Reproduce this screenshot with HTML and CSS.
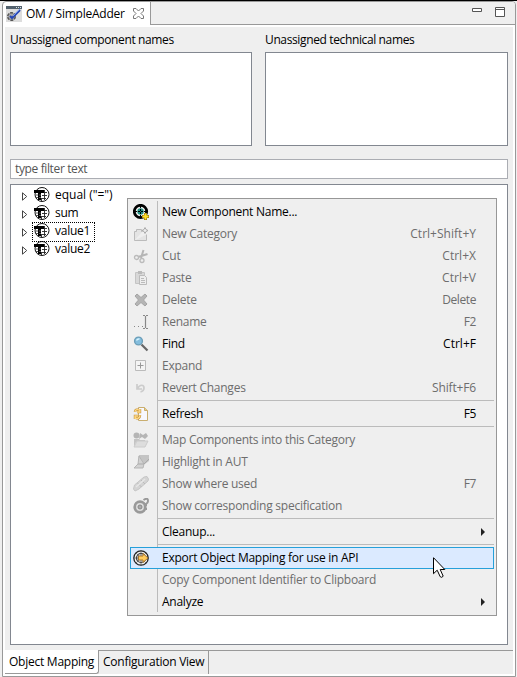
FILE: index.html
```html
<!DOCTYPE html>
<html lang="en">
<head>
<meta charset="utf-8">
<title>OM / SimpleAdder</title>
<link rel="stylesheet" href="styles.css">
</head>
<body>
<svg class="defs" width="0" height="0">
  <defs>
    <symbol id="component" viewBox="0 0 16 16">
      <circle cx="8" cy="7.500" r="7" fill="#fff" stroke="#111" stroke-width="1"/>
      <path d="M8 5.500h5M8 8.500h5M4 11.500h8M10.500 3v10M7.500 12v2" stroke="#222" stroke-width=".9" fill="none"/>
      <path d="M0 3h10v3H7v7H4V6H0z" fill="#000"/>
      <path d="M1 8h3M1 10.500h3M5 8h2M5 10.500h2" stroke="#555"/>
    </symbol>
  </defs>
</svg>
<main class="window">
  <header class="titlebar">
    <div class="view-tab">
      <svg class="tab-icon" width="16" height="16" viewBox="0 0 16 16">
        <path fill="#ddd" d="M0 0h16v16H0z"/><path fill="#53616d" d="M0 0h16v3H0z"/><path fill="#d9e4ea" d="M10 1h1v1h-1zM12 1h1v1h-1zM14 1h1v1h-1z"/>
        <circle cx="5.500" cy="10.500" r="3.800" fill="#aaa" stroke="#555" stroke-width="1.500" stroke-dasharray="3 1"/>
        <path d="M4 10l2 2 8-8" fill="none" stroke="#2847b5" stroke-width="2.200"/><path d="M7 10l7-7" stroke="#7797ef"/>
      </svg>
      <span class="t tab-title">OM / SimpleAdder</span>
      <svg class="close" width="11" height="11" viewBox="0 0 11 11"><path d="M.5.5h2.500l2.500 2.500L8 .5h2.500V3L8 5.500 10.500 8v2.500H8L5.500 8 3 10.500H.5V8L3 5.500.5 3z" fill="#fff" stroke="#777"/></svg>
    </div>
    <div class="title-fill">
      <svg width="34" height="11" viewBox="0 0 34 11"><path d="M.5 1.500h9v3h-9zM23.500.5h9v9h-9zM23.500 2.500h9" fill="#fff" stroke="#555"/></svg>
    </div>
  </header>
  <section class="content">
    <div class="names">
      <div class="name-col"><span class="t l1">Unassigned component names</span><div class="list"></div></div>
      <div class="name-col"><span class="t l2">Unassigned technical names</span><div class="list"></div></div>
    </div>
    <div class="filter"><span class="t">type filter text</span></div>
    <div class="tree">
      <div class="node"><svg class="arrow" width="6" height="9" viewBox="0 0 6 9"><path d="M.5.8v7.400L4.700 4.500z"/></svg><svg class="ni" width="16" height="16"><use href="#component"/></svg><span class="t n1">equal ("=")</span></div>
      <div class="node"><svg class="arrow" width="6" height="9" viewBox="0 0 6 9"><path d="M.5.8v7.400L4.700 4.500z"/></svg><svg class="ni" width="16" height="16"><use href="#component"/></svg><span class="t">sum</span></div>
      <div class="node focused"><svg class="arrow" width="6" height="9" viewBox="0 0 6 9"><path d="M.5.8v7.400L4.700 4.500z"/></svg><svg class="ni" width="16" height="16"><use href="#component"/></svg><span class="t">value1</span></div>
      <div class="node"><svg class="arrow" width="6" height="9" viewBox="0 0 6 9"><path d="M.5.8v7.400L4.700 4.500z"/></svg><svg class="ni" width="16" height="16"><use href="#component"/></svg><span class="t">value2</span></div>
    </div>
    <nav class="bottom-tabs"><div class="btab active"><span class="t">Object Mapping</span></div><div class="btab"><span class="t">Configuration View</span></div></nav>
  </section>
</main>

<div class="menu">
  <div class="item"><svg class="icon" viewBox="0 0 16 16"><circle cx="7.500" cy="7.500" r="6.200" fill="#eee" stroke="#000" stroke-width="2.800"/><circle cx="7.500" cy="7.500" r="3.200" fill="#249184"/><path d="M7.500 2v11M2 7.500h11" stroke="#000" stroke-dasharray="2 1"/><path d="M12.500 9v7M9 12.500h7" stroke="#8b6900" stroke-width="3"/><path d="M12.500 9.500v6M9.500 12.500h6" stroke="#ffe12d" stroke-width="2"/></svg><span class="t">New Component Name...</span></div>
  <div class="item off"><svg class="icon" viewBox="0 0 16 16"><path d="M1.500 14.500v-9h2v-2h5v2h1M1.500 14.500h12v-6" fill="#e4e4e4" stroke="#bbb"/><path d="M12 1.500l1 2 2 1-2 1-1 2-1-2-2-1 2-1z" fill="#eee" stroke="#aaa"/></svg><span class="t">New Category</span><span class="t key">Ctrl+Shift+Y</span></div>
  <div class="item off"><svg class="icon" viewBox="0 0 16 16"><path d="M10.500 2L8 10M14.500 6L5 9" stroke="#b5b5b5" stroke-width="2"/><circle cx="3.500" cy="9.500" r="2" fill="none" stroke="#bbb" stroke-width="1.300"/><circle cx="9" cy="12.500" r="2" fill="none" stroke="#bbb" stroke-width="1.300"/></svg><span class="t">Cut</span><span class="t key">Ctrl+X</span></div>
  <div class="item off"><svg class="icon" viewBox="0 0 16 16"><path d="M2.500 2.500h9v11h-9z" fill="#d8d8d8" stroke="#c4c4c4"/><path d="M5 1h4v3H5z" fill="#bbb"/><path d="M6.500 5.500h5l2 2v7h-7z" fill="#eee" stroke="#bbb"/><path d="M8 8.500h3M8 10.500h4M8 12.500h4" stroke="#bbb"/></svg><span class="t">Paste</span><span class="t key">Ctrl+V</span></div>
  <div class="item off"><svg class="icon" viewBox="0 0 16 16"><path d="M2 4l2-2 4 3.500L12 2l2 2-3.500 4L14 12l-2 2-4-3.500L4 14l-2-2 3.500-4z" fill="#b5b5b5" stroke="#a5a5a5"/></svg><span class="t">Delete</span><span class="t key k0">Delete</span></div>
  <div class="item off"><svg class="icon" viewBox="0 0 16 16"><path d="M1 12.500h1M5 12.500h1M9 12.500h1M10 1.500h2M13 1.500h2M12.500 2v12M10 14.500h2M13 14.500h2" stroke="#888" stroke-width="1.200"/></svg><span class="t">Rename</span><span class="t key k0">F2</span></div>
  <div class="item"><svg class="icon" viewBox="0 0 16 16"><path d="M8.500 8.500l6 6" stroke="#666" stroke-width="2.200"/><circle cx="5.500" cy="5" r="3.900" fill="#83bddd" stroke="#6c9eb8" stroke-width="1.400"/><path d="M3.500 4.500q1-2 3-1.500" fill="none" stroke="#d8f4ff" stroke-width="1.500"/></svg><span class="t">Find</span><span class="t key">Ctrl+F</span></div>
  <div class="item off"><svg class="icon" viewBox="0 0 16 16"><path d="M2.500 2.500h10v10h-10z" fill="#f4f4f4" stroke="#bbb"/><path d="M7.500 4.500v6M4.500 7.500h6" stroke="#999"/></svg><span class="t">Expand</span></div>
  <div class="item off"><svg class="icon" viewBox="0 0 16 16"><path d="M4 4v5h5M4.500 8.500C7 4 11 4.500 11 8q0 3-3.500 4" fill="none" stroke="#ccc" stroke-width="1.700"/></svg><span class="t">Revert Changes</span><span class="t key k1">Shift+F6</span></div>
  <div class="sep"></div>
  <div class="item"><svg class="icon" viewBox="0 0 16 16"><path d="M5.500 1.500h6l3 3v10h-9z" fill="#f7f8ff" stroke="#c9ae70"/><path d="M11.500 1.500v3h3" fill="#e9cf8c" stroke="#c9ae70"/><path d="M2 6c0-3 4-3 5-1M7 3v3H4M7 9c0 4-4 4-5 2M2 13v-3h3" fill="none" stroke="#c08f3c" stroke-width="2.400"/><path d="M2 6c0-3 4-3 5-1M7 3v3H4M7 9c0 4-4 4-5 2M2 13v-3h3" fill="none" stroke="#ffd983" stroke-width="1.300"/></svg><span class="t">Refresh</span><span class="t key k0">F5</span></div>
  <div class="sep"></div>
  <div class="item off"><svg class="icon" viewBox="0 0 16 16"><circle cx="3.500" cy="3.500" r="3" fill="#b5b5b5"/><path d="M7 1l3 2 3-2 2 3-3 3-3-2-3 2" fill="#b5b5b5"/><path d="M1 7h5l1 1h5v2H3l-2 5z" fill="#c4c4c4"/><path d="M4 9h11l-3 6H1z" fill="#ddd" stroke="#ccc"/></svg><span class="t">Map Components into this Category</span></div>
  <div class="item off"><svg class="icon" viewBox="0 0 16 16"><path d="M6 1h10v6l-4 3-7-3z" fill="#c4c4c4"/><path d="M6 2l5 8-1 4H1l4-4z" fill="#d2d2d2" stroke="#b5b5b5"/><path d="M5 10h6l5-5" fill="none" stroke="#aaa"/></svg><span class="t">Highlight in AUT</span></div>
  <div class="item off"><svg class="icon" viewBox="0 0 16 16"><path d="M11 1l3-.5 1.500 2.500-.5 2-9 8-4 2-1.500-2 1-4z" fill="#d4d4d4" stroke="#c6c6c6"/><path d="M8 4l4 4M4.500 7l4 4" stroke="#bbb"/><path d="M3 11l9-8" stroke="#e6e6e6" stroke-width="1.500"/></svg><span class="t">Show where used</span><span class="t key k0">F7</span></div>
  <div class="item off"><svg class="icon" viewBox="0 0 16 16"><circle cx="7" cy="9" r="5.300" fill="#ddd" stroke="#999" stroke-width="2.700"/><circle cx="7" cy="9" r="2" fill="#aaa" stroke="#888"/><path d="M10.500 2Q15-1 15 3q0 2-2 3v2M13 10v2" fill="none" stroke="#999" stroke-width="2"/></svg><span class="t">Show corresponding specification</span></div>
  <div class="sep"></div>
  <div class="item"><svg class="icon"></svg><span class="t">Cleanup...</span><i class="sub"></i></div>
  <div class="sep"></div>
  <div class="item selected"><svg class="icon" viewBox="0 0 16 16"><circle cx="8" cy="8" r="7.200" fill="#eee" stroke="#222" stroke-width="1.300"/><circle cx="8" cy="8" r="4.500" fill="#ddd" stroke="#333" stroke-width="1.200"/><path d="M8 0v16M0 8h16M3 3l10 10M13 3L3 13" stroke="#555" stroke-width=".7"/><path d="M5.500 6H10V3.500L15 8l-5 4.500V10H5.500z" fill="#ffcc60" stroke="#a06d24" stroke-width=".9"/></svg><span class="t">Export Object Mapping for use in API</span></div>
  <div class="item off"><svg class="icon"></svg><span class="t">Copy Component Identifier to Clipboard</span></div>
  <div class="item"><svg class="icon"></svg><span class="t">Analyze</span><i class="sub"></i></div>
</div>
<svg class="cursor" width="13" height="22" viewBox="0 0 13 22"><path d="M.5.7v16l3.700-3.500 3 6.500q1.500 1.500 3-.5l-3-6.700h4.600z" fill="#fff" stroke="#000"/></svg>
</body>
</html>
```
FILE: styles.css
```css
* { box-sizing: border-box; }
body {
  margin: 0; width: 517px; height: 677px; overflow: hidden;
  background: #efefef; border-top: 1px solid #000;
  font: 12px/18px "Open Sans", "Noto Sans", sans-serif; color: #000;
}
.defs { display: block; height: 0; }
svg { flex: none; }
.t { white-space: nowrap; letter-spacing: -0.25px; }
.window {
  margin-left: 2px; width: 514px; height: 676px; background: #fff;
  border: 1px solid #999; border-radius: 4px 4px 0 0;
  display: flex; flex-direction: column;
}
.titlebar { display: flex; height: 23px; flex: none; }
.view-tab { width: 147px; display: flex; align-items: center; padding-left: 3px; }
.tab-title { margin-left: 4px; width: 107px; letter-spacing: -0.24px; }
.title-fill {
  flex: 1; background: #efefef; border: solid #999; border-width: 0 0 1px 1px;
  border-radius: 0 3px 0 0; display: flex; justify-content: flex-end; padding: 5px 9px 0 0;
}
.content { margin: 2px 2px 2px; flex: 1; background: #efefef; display: flex; flex-direction: column; min-height: 0; }
.names { display: flex; gap: 13px; padding: 4px 5px 0; height: 119px; flex: none; }
.name-col { display: flex; flex-direction: column; flex: 0 0 242px; }
.name-col + .name-col { flex-basis: 243px; }
.l1, .l2 { letter-spacing: -0.37px; }
.list { margin-top: 3px; height: 94px; background: #fff; border: 1px solid #828790; }
.filter { margin: 13px 5px 0; height: 20px; flex: none; background: #fff; border: 1px solid #abadb3; padding-left: 4px; color: #555; }
.filter .t { letter-spacing: -0.37px; }
.tree { margin: 5px 5px 0; height: 461px; flex: none; background: #fff; border: 1px solid #828790; padding: 1px 0 0 11px; }
.node { display: flex; align-items: center; height: 18px; }
.arrow { margin-top: 2px; fill: #fff; stroke: #444; }
.ni { margin: 0 5px 0 6px; }
.n1 { letter-spacing: -0.02px; }
.focused { position: relative; }
.focused::after { content: ""; position: absolute; left: 10px; top: 0; width: 61px; height: 18px; border: 1px dotted #000; }
.bottom-tabs { margin-top: 5px; display: flex; height: 24px; border-top: 1px solid #999; }
.btab { width: 110px; border-right: 1px solid #999; padding: 2px 0 0 4px; }
.btab.active { width: 94px; margin-top: -1px; height: 24px; background: #fff; border-bottom: 1px solid #999; padding: 3px 0 0 4px; border-radius: 0 0 3px 0; }
.menu {
  position: absolute; left: 127px; top: 198px; width: 370px; height: 418px;
  border: 1px solid #979797; padding: 2px;
  background: linear-gradient(#bbb, #bbb) 29px 2px / 1px 411px no-repeat #efefef;
}
.item { height: 22px; display: flex; align-items: center; padding: 0 18px 0 3px; }
.off { color: #6d6d6d; }
.icon { width: 16px; height: 16px; margin-right: 13px; }
.key { margin-left: auto; letter-spacing: 0.02px; }
.k0 { letter-spacing: -0.4px; }
.k1 { letter-spacing: -0.15px; }
.sep { height: 4px; margin-left: 27px; background: linear-gradient(#bbb, #bbb) 0 1px / 100% 1px no-repeat; }
.selected { background: #dbeaff; border: 1px solid #26a0da; padding-left: 2px; }
.sub { margin-left: auto; margin-right: -9px; border: solid transparent; border-width: 4px 0 4px 4px; border-left-color: #222; }
.cursor { position: absolute; left: 433px; top: 557px; }
```
